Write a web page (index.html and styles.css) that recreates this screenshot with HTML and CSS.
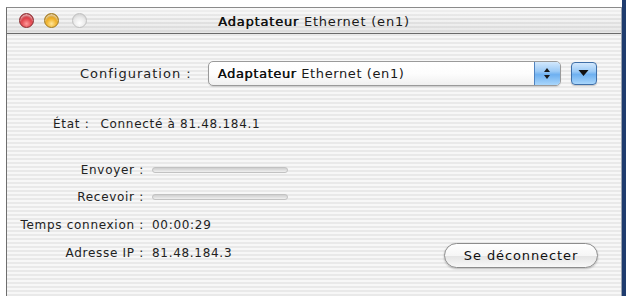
FILE: index.html
```html
<!DOCTYPE html>
<html lang="fr">
<head>
<meta charset="utf-8">
<title>Adaptateur Ethernet (en1)</title>
<link rel="stylesheet" href="styles.css">
</head>
<body>
<div class="window">
  <div class="titlebar">
    <div class="lights">
      <span class="light red"></span>
      <span class="light yellow"></span>
      <span class="light gray"></span>
    </div>
    <div class="title"><span class="strong">Adaptateur</span> Ethernet (en1)</div>
    <div class="lights-spacer"></div>
  </div>
  <div class="content">
    <div class="config">
      <span class="config-label">Configuration :</span>
      <div class="popup">
        <span class="popup-text"><span class="strong">Adaptateur</span> Ethernet (en1)</span>
        <span class="popup-arrows">
          <svg width="8" height="13" viewBox="0 0 8 13"><path d="M4 1 L7 5 L1 5 Z M4 12 L7 8 L1 8 Z" fill="#1a1a1a"/></svg>
        </span>
      </div>
      <div class="menu-btn">
        <svg width="11" height="8" viewBox="0 0 11 8"><path d="M0.5 1 L10.5 1 L5.5 7 Z" fill="#111"/></svg>
      </div>
    </div>
    <div class="state">
      <span class="state-label">État :</span>
      <span class="state-value">Connecté à 81.48.184.1</span>
    </div>
    <div class="stats">
      <span class="lbl">Envoyer :</span><span class="bar"></span>
      <span class="lbl">Recevoir :</span><span class="bar"></span>
      <span class="lbl">Temps connexion :</span><span class="val">00:00:29</span>
      <span class="lbl">Adresse IP :</span><span class="val">81.48.184.3</span>
      <button class="disconnect">Se déconnecter</button>
    </div>
  </div>
</div>
</body>
</html>
```
FILE: styles.css
```css
html, body {
  margin: 0;
  padding: 0;
  height: 296px;
  overflow: hidden;
}
body {
  background: linear-gradient(to right, #ffffff 622px, #1f3c6e 622px);
  font-family: "DejaVu Sans", "Liberation Sans", sans-serif;
  color: #1e1e1e;
}
.window {
  margin: 7px 0 0 6px;
  width: 616px;
  height: 289px;
  box-sizing: border-box;
  border: 1px solid #8a8a8a;
  border-left-color: #6e6e6e;
  border-right-color: #9aa3b0;
  border-bottom: none;
  background: repeating-linear-gradient(to bottom, #f7f7f7 0, #f7f7f7 2px, #e9e9e9 2px, #e9e9e9 4px);
}
.titlebar {
  height: 25px;
  display: flex;
  align-items: center;
  border-bottom: 1px solid #6a6a6a;
  background:
    linear-gradient(to bottom, rgba(255,255,255,0.55), rgba(255,255,255,0) 45%, rgba(200,200,200,0.25)),
    repeating-linear-gradient(to bottom, #f2f2f2 0, #f2f2f2 2px, #e2e2e2 2px, #e2e2e2 4px);
}
.lights {
  display: flex;
  gap: 10px;
  padding-left: 12px;
  width: 90px;
  box-sizing: border-box;
}
.lights-spacer { width: 90px; }
.light {
  width: 15px;
  height: 15px;
  border-radius: 50%;
  box-sizing: border-box;
}
.red {
  background: radial-gradient(circle at 50% 75%, #ff9a9a 0, #e0424a 45%, #9a1a20 100%);
  border: 1px solid #8a2a2e;
  box-shadow: inset 0 2px 2px rgba(255,255,255,0.6);
}
.yellow {
  background: radial-gradient(circle at 50% 75%, #ffe69a 0, #f0b025 45%, #9a6a10 100%);
  border: 1px solid #a07a20;
  box-shadow: inset 0 2px 2px rgba(255,255,255,0.6);
  margin-right: 3px;
}
.gray {
  background: radial-gradient(circle at 50% 70%, #ffffff 0, #e8e8e8 55%, #c4c4c4 100%);
  border: 1px solid #c0c0c0;
}
.title {
  flex: 1;
  text-align: center;
  font-size: 13px;
  letter-spacing: 0.8px;
  color: #1a1a1a;
  padding-top: 1px;
}
.strong {
  text-shadow: 0.4px 0 0 currentColor;
  color: #111;
}

.content {
  padding-top: 26px;
}
.config {
  display: flex;
  align-items: center;
  height: 26px;
  padding-left: 73px;
}
.config-label {
  font-size: 13px;
  letter-spacing: 1px;
  color: #222;
  margin-right: 16px;
}
.popup {
  width: 353px;
  height: 25px;
  box-sizing: border-box;
  border: 1px solid #9a9a9a;
  border-radius: 5px;
  display: flex;
  overflow: hidden;
  background: linear-gradient(to bottom, #ffffff 0%, #fdfdfd 50%, #f0f0f0 100%);
  box-shadow: 0 1px 1px rgba(0,0,0,0.12);
}
.popup-text {
  flex: 1;
  font-size: 13px;
  letter-spacing: 0.6px;
  line-height: 23px;
  padding-left: 9px;
  color: #1a1a1a;
}
.popup-arrows {
  width: 25px;
  display: flex;
  align-items: center;
  justify-content: center;
  border-left: 1px solid #4f83c0;
  background: linear-gradient(to bottom, #d2e8fd 0%, #9ccaf6 40%, #6eb0f0 55%, #a9d6fb 100%);
}
.menu-btn {
  margin-left: 10px;
  width: 26px;
  height: 23px;
  box-sizing: border-box;
  border: 1px solid #3f6fa8;
  border-radius: 4px;
  display: flex;
  align-items: center;
  justify-content: center;
  background: linear-gradient(to bottom, #d2e8fd 0%, #9ccaf6 40%, #6eb0f0 55%, #a9d6fb 100%);
  box-shadow: 0 1px 1px rgba(0,0,0,0.2);
}

.state {
  margin-top: 30px;
  padding-left: 46px;
  height: 16px;
  display: flex;
  align-items: center;
  font-size: 12px;
  letter-spacing: 0.7px;
}
.state-label { margin-right: 11px; }

.stats {
  margin-top: 24px;
  display: grid;
  grid-template-columns: 126px 136px 1fr;
  grid-template-rows: 27px 27px 29px 27px;
  column-gap: 8px;
  padding-left: 11px;
  padding-right: 23px;
  align-items: center;
  font-size: 12px;
  letter-spacing: 0.7px;
}
.lbl {
  grid-column: 1;
  text-align: right;
  white-space: nowrap;
  color: #222;
}
.val {
  grid-column: 2;
  color: #222;
}
.bar {
  grid-column: 2;
  height: 6px;
  box-sizing: border-box;
  border: 1px solid #c2c2c2;
  border-radius: 3px;
  background: linear-gradient(to bottom, #cfcfcf, #efefef);
}
.disconnect {
  grid-column: 3;
  grid-row: 4;
  justify-self: end;
  align-self: start;
  margin-top: 4px;
  width: 154px;
  height: 25px;
  border: 1px solid #8c8c8c;
  border-radius: 13px;
  background: linear-gradient(to bottom, #ffffff 0%, #f6f6f6 50%, #e4e4e4 52%, #f8f8f8 100%);
  box-shadow: 0 1px 2px rgba(0,0,0,0.25);
  font-family: "DejaVu Sans", "Liberation Sans", sans-serif;
  font-size: 13px;
  letter-spacing: 0.9px;
  color: #111;
  padding: 0;
}
```
